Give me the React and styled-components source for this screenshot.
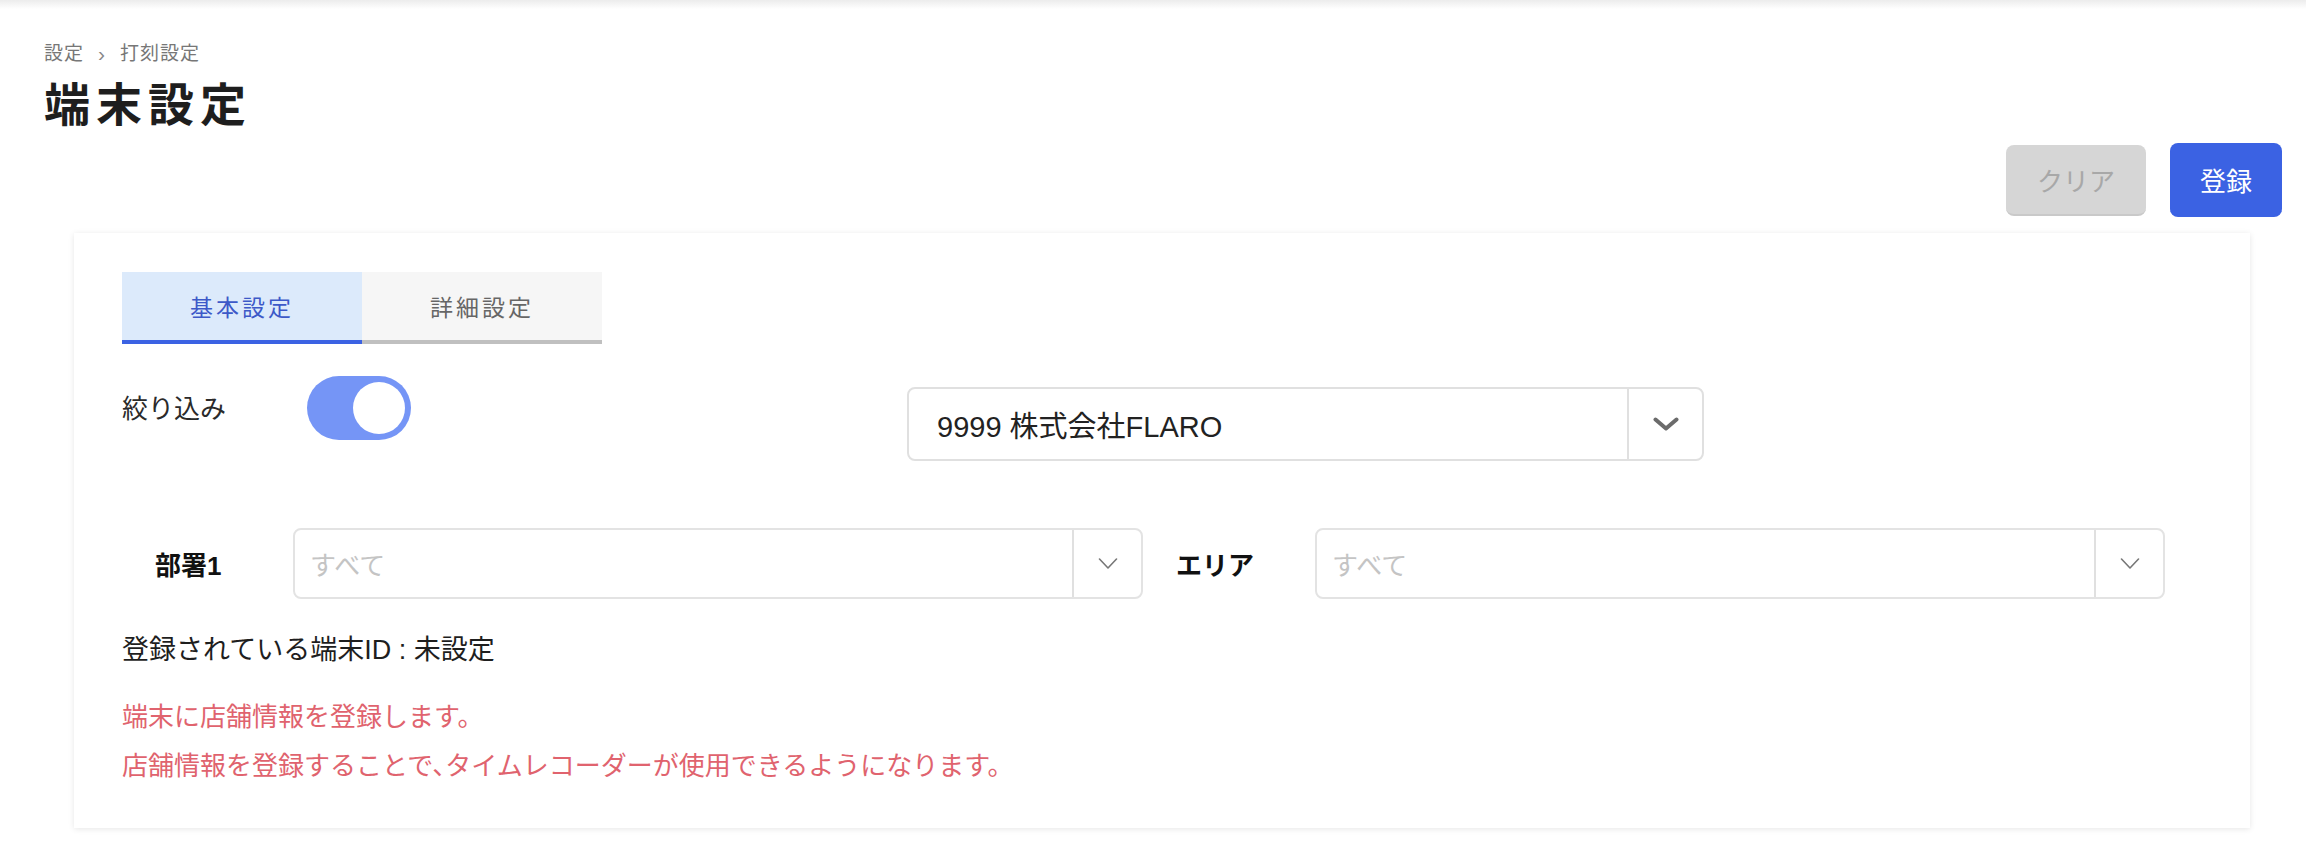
import React, { useState } from 'react';
import styled, { createGlobalStyle } from 'styled-components';

const GlobalStyle = createGlobalStyle`
  body {
    margin: 0;
    background: linear-gradient(#ececec, #ffffff 9px) no-repeat #ffffff;
    font-family: "Liberation Sans", "Noto Sans CJK JP", sans-serif;
    color: #222;
  }
`;

const SPage = styled.div`
  padding: 42px 24px 26px 44px;
`;
const SBreadcrumb = styled.div`
  display: flex;
  align-items: center;
  gap: 14px;
  font-size: 19px;
  line-height: 24px;
  letter-spacing: 1px;
  color: #777;
`;
const SCrumbSep = styled.span`
  font-size: 21px;
  color: #888;
`;
const STitle = styled.h1`
  margin: 11px 0 0;
  font-size: 46px;
  line-height: 56px;
  letter-spacing: 6px;
  font-weight: 700;
  color: #1e1e1e;
`;
const SActions = styled.div`
  display: flex;
  justify-content: flex-end;
  align-items: center;
  gap: 24px;
  margin-top: 10px;
`;
const SButton = styled.button`
  height: ${(p) => (p.$primary ? '74px' : '71px')};
  width: ${(p) => (p.$primary ? '112px' : '140px')};
  border: none;
  border-bottom: 2px solid ${(p) => (p.$primary ? '#3b62e3' : '#c9c9c9')};
  border-radius: 8px;
  background: ${(p) => (p.$primary ? '#3b62e3' : '#d6d6d6')};
  color: ${(p) => (p.$primary ? '#ffffff' : '#a8a8a8')};
  font-family: inherit;
  font-size: 26px;
  cursor: pointer;
`;
const SCard = styled.div`
  margin: 16px 32px 0 30px;
  padding: 39px 48px 37px;
  background: #fff;
  box-shadow: 0 1px 6px rgba(0, 0, 0, 0.1);
`;
const STabs = styled.div`
  display: flex;
`;
const STab = styled.div`
  width: 240px;
  height: 68px;
  display: flex;
  align-items: center;
  justify-content: center;
  font-size: 23px;
  letter-spacing: 3px;
  background: ${(p) => (p.$active ? '#dceafb' : '#f6f6f6')};
  color: ${(p) => (p.$active ? '#3d59c8' : '#666')};
  border-bottom: 4px solid ${(p) => (p.$active ? '#3b62e3' : '#c0c0c0')};
`;
const SFilterRow = styled.div`
  display: flex;
  align-items: flex-start;
  margin-top: 32px;
`;
const SFilterLabel = styled.div`
  width: 185px;
  margin-top: 14px;
  font-size: 26px;
  line-height: 39px;
  color: #2a2a2a;
`;
const SToggle = styled.button`
  width: 104px;
  height: 64px;
  padding: 6px;
  border: none;
  border-radius: 32px;
  background: ${(p) => (p.$on ? '#7595f6' : '#ccc')};
  display: flex;
  justify-content: ${(p) => (p.$on ? 'flex-end' : 'flex-start')};
  cursor: pointer;
`;
const SKnob = styled.span`
  width: 52px;
  height: 52px;
  border-radius: 50%;
  background: #fff;
`;
const SCompanySelect = styled.div`
  margin: 11px 0 0 496px;
  width: 797px;
  height: 74px;
  box-sizing: border-box;
  display: flex;
  border: 2px solid #e0e0e0;
  border-radius: 8px;
`;
const SCompanyValue = styled.div`
  flex: 1;
  display: flex;
  align-items: center;
  padding-left: 28px;
  font-size: 29px;
  color: #222;
`;
const SArrowCell = styled.div`
  width: ${(p) => p.$width}px;
  display: flex;
  align-items: center;
  justify-content: center;
  border-left: 2px solid #e0e0e0;
`;
const SAreaRow = styled.div`
  display: grid;
  grid-template-columns: 171px 850px 172px 850px;
  align-items: center;
  margin-top: 67px;
`;
const SAreaLabel = styled.div`
  padding-left: 33px;
  font-size: 26px;
  font-weight: 700;
  color: #111;
`;
const SDropdown = styled.div`
  height: 71px;
  box-sizing: border-box;
  display: flex;
  border: 2px solid #e3e3e3;
  border-radius: 8px;
`;
const SPlaceholder = styled.div`
  flex: 1;
  display: flex;
  align-items: center;
  padding-left: 15px;
  font-size: 26px;
  color: #c4c4c4;
`;
const SIdText = styled.div`
  margin-top: 32px;
  font-size: 27px;
  line-height: 39px;
  color: #1e1e1e;
`;
const SNotice = styled.div`
  margin-top: 23px;
  font-size: 26px;
  line-height: 49px;
  font-feature-settings: "halt";
  color: #e0636e;
`;

const Chevron = ({ bold }) => (
  <svg
    width={bold ? 26 : 20}
    height={bold ? 14 : 11}
    viewBox={bold ? '0 0 26 14' : '0 0 20 11'}
    fill="none"
    stroke={bold ? '#6b6b6b' : '#777'}
    strokeWidth={bold ? 4 : 1.6}
    strokeLinecap="round"
    strokeLinejoin="round"
  >
    {bold ? <polyline points="2.5,2.5 13,11.5 23.5,2.5" /> : <polyline points="1.5,1 10,10 18.5,1" />}
  </svg>
);

const AreaSelect = ({ label }) => (
  <>
    <SAreaLabel>{label}</SAreaLabel>
    <SDropdown>
      <SPlaceholder>すべて</SPlaceholder>
      <SArrowCell $width={67}>
        <Chevron />
      </SArrowCell>
    </SDropdown>
  </>
);

const App = () => {
  const [filterOn, setFilterOn] = useState(true);

  return (
    <SPage>
      <GlobalStyle />
      <SBreadcrumb>
        <span>設定</span>
        <SCrumbSep>›</SCrumbSep>
        <span>打刻設定</span>
      </SBreadcrumb>
      <STitle>端末設定</STitle>
      <SActions>
        <SButton>クリア</SButton>
        <SButton $primary>登録</SButton>
      </SActions>
      <SCard>
        <STabs>
          <STab $active>基本設定</STab>
          <STab>詳細設定</STab>
        </STabs>
        <SFilterRow>
          <SFilterLabel>絞り込み</SFilterLabel>
          <SToggle $on={filterOn} onClick={() => setFilterOn(!filterOn)}>
            <SKnob />
          </SToggle>
          <SCompanySelect>
            <SCompanyValue>9999 株式会社FLARO</SCompanyValue>
            <SArrowCell $width={73}>
              <Chevron bold />
            </SArrowCell>
          </SCompanySelect>
        </SFilterRow>
        <SAreaRow>
          <AreaSelect label="部署1" />
          <AreaSelect label="エリア" />
        </SAreaRow>
        <SIdText>登録されている端末ID : 未設定</SIdText>
        <SNotice>
          <div>端末に店舗情報を登録します。</div>
          <div>店舗情報を登録することで、タイムレコーダーが使用できるようになります。</div>
        </SNotice>
      </SCard>
    </SPage>
  );
};

export default App;
